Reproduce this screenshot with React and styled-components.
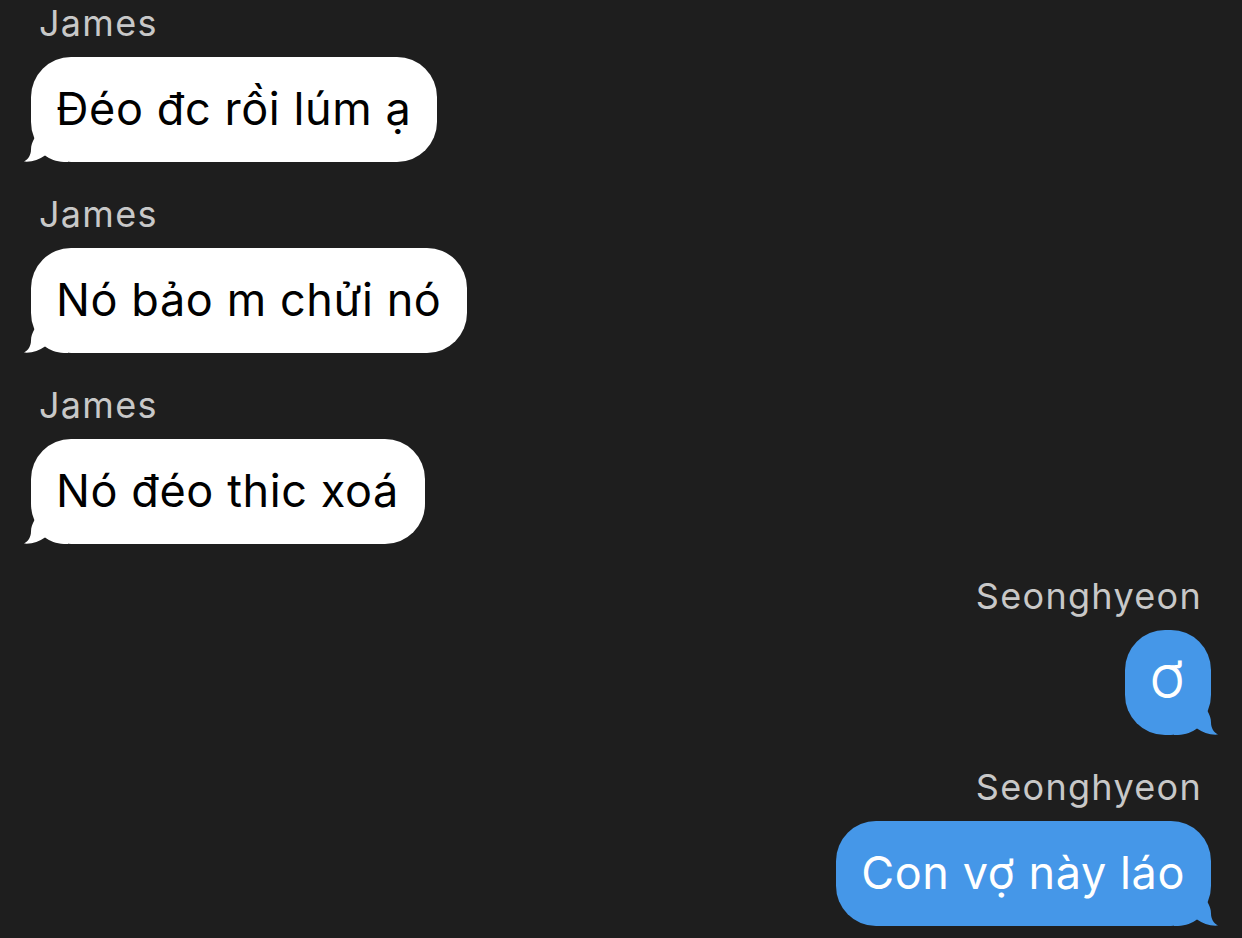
import React from "react";
import styled, { createGlobalStyle, css } from "styled-components";

const Global = createGlobalStyle`
  html, body { margin: 0; padding: 0; background: #1e1e1e; }
  body { font-family: Inter, "Noto Sans", sans-serif; -webkit-font-smoothing: antialiased; }
`;

const Thread = styled.div`
  width: 1242px;
  height: 938px;
  box-sizing: border-box;
  overflow: hidden;
  background: #1e1e1e;
  padding: 3px 31px 0 31px;
  display: flex;
  flex-direction: column;
  gap: 32px;
`;

const Group = styled.div`
  display: flex;
  flex-direction: column;
  align-items: ${(p) => (p.$mine ? "flex-end" : "flex-start")};
`;

const Name = styled.div`
  font-size: 36px;
  line-height: 41px;
  color: #c8c8c8;
  letter-spacing: 1.3px;
  margin-bottom: 13px;
  ${(p) => (p.$mine ? css`margin-right: 9px;` : css`margin-left: 8px;`)}
`;

const Bubble = styled.div`
  position: relative;
  box-sizing: border-box;
  height: 105px;
  padding: 25px 26px 27px 25px;
  border-radius: 40px;
  font-size: 45px;
  line-height: 53px;
  letter-spacing: 0.6px;
  white-space: nowrap;
  background: ${(p) => (p.$mine ? "#4597e8" : "#ffffff")};
  color: ${(p) => (p.$mine ? "#ffffff" : "#000000")};
`;

const Tail = styled.svg`
  position: absolute;
  bottom: 0;
  width: 44px;
  height: 24px;
  ${(p) =>
    p.$mine
      ? css`right: -7px; transform: scaleX(-1);`
      : css`left: -7px;`}
`;

function BubbleTail({ mine }) {
  return (
    <Tail $mine={mine} viewBox="0 0 44 24" aria-hidden="true">
      <path
        d="M10.5 0 C8.3 4 7 7.5 7 11.5 C7 17 4.3 21.2 0 23.6 C8 24.3 15 21.6 21 17.5 C26 21.2 32 23.6 40 24 H44 V0 Z"
        fill={mine ? "#4597e8" : "#ffffff"}
      />
    </Tail>
  );
}

const messages = [
  { name: "James", text: "Đéo đc rồi lúm ạ" },
  { name: "James", text: "Nó bảo m chửi nó" },
  { name: "James", text: "Nó đéo thic xoá" },
  { name: "Seonghyeon", text: "Ơ", mine: true },
  { name: "Seonghyeon", text: "Con vợ này láo", mine: true },
];

export default function App() {
  return (
    <>
      <Global />
      <Thread>
        {messages.map((m, i) => (
          <Group key={i} $mine={m.mine}>
            <Name $mine={m.mine}>{m.name}</Name>
            <Bubble $mine={m.mine}>
              {m.text}
              <BubbleTail mine={m.mine} />
            </Bubble>
          </Group>
        ))}
      </Thread>
    </>
  );
}
